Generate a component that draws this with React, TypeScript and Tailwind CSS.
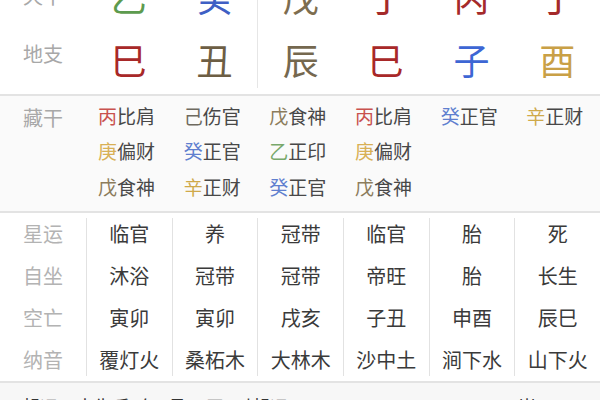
const stems = [
  { ch: '乙', color: 'text-[#5d9b4e]' },
  { ch: '癸', color: 'text-[#3f5fc4]' },
  { ch: '戊', color: 'text-[#7d6d4f]' },
  { ch: '丁', color: 'text-[#a42a2a]' },
  { ch: '丙', color: 'text-[#a42a2a]' },
  { ch: '丁', color: 'text-[#a42a2a]' },
];

const branches = [
  { ch: '巳', color: 'text-[#a82828]' },
  { ch: '丑', color: 'text-[#6d5e44]' },
  { ch: '辰', color: 'text-[#75684f]' },
  { ch: '巳', color: 'text-[#a82828]' },
  { ch: '子', color: 'text-[#3d66d4]' },
  { ch: '酉', color: 'text-[#c9a046]' },
];

const stemColor: Record<string, string> = {
  丙: 'text-[#c9524f]',
  己: 'text-[#6e6a60]',
  庚: 'text-[#d8b055]',
  癸: 'text-[#5f7fcf]',
  戊: 'text-[#8c7c5c]',
  辛: 'text-[#cfa94a]',
  乙: 'text-[#78a86a]',
};

// 藏干, one list per pillar
const hidden = [
  [['丙', '比肩'], ['庚', '偏财'], ['戊', '食神']],
  [['己', '伤官'], ['癸', '正官'], ['辛', '正财']],
  [['戊', '食神'], ['乙', '正印'], ['癸', '正官']],
  [['丙', '比肩'], ['庚', '偏财'], ['戊', '食神']],
  [['癸', '正官']],
  [['辛', '正财']],
];

const labels = ['星运', '自坐', '空亡', '纳音'];
const table = [
  ['临官', '沐浴', '寅卯', '覆灯火'],
  ['养', '冠带', '寅卯', '桑柘木'],
  ['冠带', '冠带', '戌亥', '大林木'],
  ['临官', '帝旺', '子丑', '沙中土'],
  ['胎', '胎', '申酉', '涧下水'],
  ['死', '长生', '辰巳', '山下火'],
];

const font = { fontFamily: '"Noto Sans CJK SC", "Noto Sans", sans-serif' };

export default function App() {
  return (
    <div className="w-[600px] h-[400px] overflow-hidden bg-white" style={font}>
      {/* 天干 / 地支 */}
      <div className="pb-[6px]">
        <div className="grid grid-cols-[86px_repeat(6,1fr)] -mt-[32px]">
          <div className="h-[63px] pt-[13px] pl-[23px] text-[20px] text-[#a8a8a8]">天干</div>
          {stems.map((s, i) => (
            <div
              key={i}
              className={`h-[63px] pb-[8px] flex items-center justify-center text-[36px] leading-none ${s.color} ${i === 2 ? 'border-l border-[#e6e6e6]' : ''}`}
            >
              {s.ch}
            </div>
          ))}
          <div className="h-[57px] pt-[8px] pl-[23px] text-[20px] text-[#a8a8a8]">地支</div>
          {branches.map((s, i) => (
            <div
              key={i}
              className={`h-[57px] pb-[2px] flex items-center justify-center text-[36px] leading-none ${s.color} ${i === 2 ? 'border-l border-[#e6e6e6]' : ''}`}
            >
              {s.ch}
            </div>
          ))}
        </div>
      </div>

      {/* 藏干 */}
      <div className="border-t-2 border-[#e3e3e3] bg-[#fafafa] pt-[2px] pb-[6px] grid grid-cols-[86px_repeat(6,1fr)]">
        <div className="pl-[23px] pt-[5px] text-[20px] text-[#a8a8a8] leading-[30px]">藏干</div>
        {hidden.map((col, i) => (
          <div key={i} className="flex flex-col pl-[12px]">
            {col.map(([g, god], j) => (
              <div key={j} className="h-[35.5px] flex items-center text-[19px] text-[#484848]">
                <span className={stemColor[g]}>{g}</span>
                <span>{god}</span>
              </div>
            ))}
          </div>
        ))}
      </div>

      {/* 星运 / 自坐 / 空亡 / 纳音 */}
      <div className="border-t-2 border-[#e3e3e3] flex h-[170px]">
        <div className="w-[86px] flex flex-col">
          {labels.map((l) => (
            <div key={l} className="h-[42px] flex items-center pl-[23px] text-[20px] text-[#b3b3b3]">
              {l}
            </div>
          ))}
        </div>
        {table.map((col, i) => (
          <div key={i} className="flex-1 my-[5px] border-l border-[#e2e2e2] flex flex-col">
            <div className="-my-[5px] flex flex-col">
              {col.map((t, j) => (
                <div key={j} className="h-[42px] flex items-center justify-center text-[20px] text-[#3a3a3a]">
                  {t}
                </div>
              ))}
            </div>
          </div>
        ))}
      </div>

      {/* 起运 */}
      <div className="border-t-2 border-[#e3e3e3] bg-[#f7f7f7] h-[40px] flex justify-between pl-[22px] pr-[64px] pt-[10px] text-[18px] text-[#333]">
        <span>起运：出生后2年1月14天0时起运</span>
        <span>90岁</span>
      </div>
    </div>
  );
}
